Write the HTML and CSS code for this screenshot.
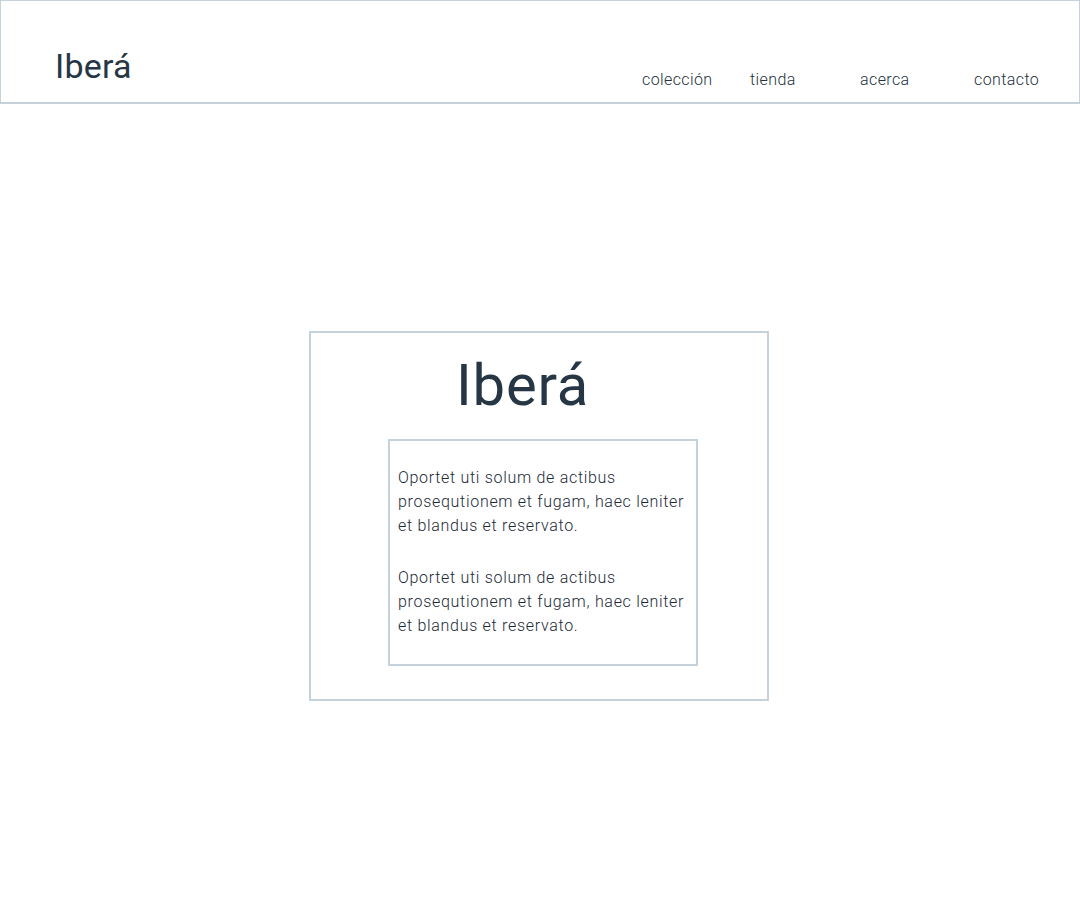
FILE: index.html
```html
<!DOCTYPE html>
<html lang="es">
<head>
<meta charset="utf-8">
<title>Iberá</title>
<link rel="stylesheet" href="styles.css">
</head>
<body>
<header class="site-header">
  <div class="logo">Iberá</div>
  <nav class="nav">
    <a class="nav-item nav-coleccion" href="#">colección</a>
    <a class="nav-item nav-tienda" href="#">tienda</a>
    <a class="nav-item nav-acerca" href="#">acerca</a>
    <a class="nav-item nav-contacto" href="#">contacto</a>
  </nav>
</header>
<main class="main">
  <section class="card">
    <h1 class="card-title">Iberá</h1>
    <div class="card-body">
      <p class="card-text">Oportet uti solum de actibus prosequtionem et fugam, haec leniter et blandus et reservato.</p>
      <p class="card-text">Oportet uti solum de actibus prosequtionem et fugam, haec leniter et blandus et reservato.</p>
    </div>
  </section>
</main>
</body>
</html>
```
FILE: styles.css
```css
* { box-sizing: border-box; }
html, body { margin: 0; padding: 0; background: #ffffff; }
body {
  font-family: Roboto, "Liberation Sans", sans-serif;
  color: #263645;
  width: 1080px;
  height: 924px;
}
.site-header {
  height: 104px;
  border: 1px solid #c5d2dc;
  border-bottom-width: 2px;
  display: flex;
  justify-content: space-between;
  align-items: flex-start;
  padding: 0 0 0 54px;
}
.logo {
  font-size: 34px;
  line-height: 1;
  margin-top: 48px;
  font-weight: 400;
  letter-spacing: 0.2px;
  color: #263645;
}
.nav {
  display: flex;
  margin-top: 71px;
}
.nav-item {
  font-size: 16px;
  line-height: 1;
  font-weight: 300;
  letter-spacing: 0.4px;
  color: #22313e;
  text-decoration: none;
}
.nav-coleccion { width: 108px; }
.nav-tienda { width: 110px; }
.nav-acerca { width: 114px; }
.nav-contacto { width: 105px; }
.main {
  display: flex;
  justify-content: center;
  padding-top: 227px;
  padding-right: 2px;
}
.card {
  width: 460px;
  border: 2px solid #c5d2dc;
  padding: 23px 0 33px 0;
}
.card-title {
  margin: 0 0 25px 0;
  padding-left: 145px;
  font-size: 58px;
  line-height: 1;
  font-weight: 400;
  letter-spacing: 0.8px;
  color: #263645;
}
.card-body {
  width: 310px;
  margin-left: 77px;
  border: 2px solid #c5d2dc;
  padding: 25px 4px 26px 8px;
}
.card-text {
  margin: 0;
  font-size: 16px;
  line-height: 24px;
  font-weight: 300;
  letter-spacing: 0.7px;
  color: #1c2a37;
}
.card-text + .card-text { margin-top: 28px; }
```
